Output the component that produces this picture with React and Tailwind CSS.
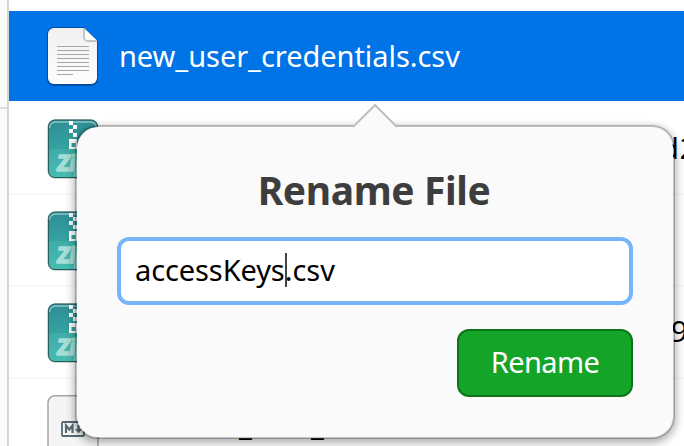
function TextFileIcon() {
  return (
    <svg width="56" height="64" viewBox="0 0 56 64" className="-mx-0.5 shrink-0 translate-y-px">
      <defs>
        <linearGradient id="paper" x1="0" y1="0" x2="0" y2="1">
          <stop offset="0" stopColor="#f1f1f1" />
          <stop offset="1" stopColor="#fdfdfd" />
        </linearGradient>
      </defs>
      <path d="M9 2H38.500L53 16.500V54a7 7 0 0 1-7 7H9a7 7 0 0 1-7-7V9a7 7 0 0 1 7-7Z" fill="#00418d" opacity=".75" />
      <path d="M9 3H38.500L52 16.500V53a6 6 0 0 1-6 6H9a6 6 0 0 1-6-6V9a6 6 0 0 1 6-6Z" fill="url(#paper)" />
      <path d="M39 3v9a4 4 0 0 0 4 4h9" fill="none" stroke="#c4c4c4" strokeWidth="2" />
      <path d="M40 4L51.500 15H43a3 3 0 0 1-3-3Z" fill="#fff" />
      <path d="M12 21.500h32M12 25.500h32M12 29.500h32M12 33.500h32M12 37.500h32M12 41.500h32M12 45.500h32M12 49.500h16" stroke="#a6a6a6" />
    </svg>
  );
}

function ZipIcon() {
  return (
    <svg width="52" height="60" viewBox="0 0 52 60" className="shrink-0 translate-y-px">
      <defs>
        <linearGradient id="zip" x1="0" y1="0" x2="0.2" y2="1">
          <stop offset="0" stopColor="#2c8b93" />
          <stop offset="1" stopColor="#3fb8ae" />
        </linearGradient>
      </defs>
      <rect x="0.500" y="0.500" width="51" height="59" rx="7.500" fill="#245f63" opacity=".5" />
      <rect x="1.500" y="1" width="49" height="57.500" rx="6.500" fill="url(#zip)" stroke="#2a5d60" />
      <path d="M2.500 9a6 6 0 0 1 6-6h35a6 6 0 0 1 6 6" fill="none" stroke="#8cc5c6" strokeWidth="1.300" />
      <path d="M2 30h48v22a6 6 0 0 1-6 6H8a6 6 0 0 1-6-6Z" fill="#6ad1bd" opacity=".2" />
      <path d="M22 2h4v4h4v4h-4v4h4v4h-4v-4h-4v-4h4V6h-4ZM22 20h8v10h-8ZM24.500 24v4h4v-4Z" fill="#fff" fillRule="evenodd" />
      <text x="10" y="52" fontFamily="Roboto, sans-serif" fontSize="22" fontWeight="900" fontStyle="italic" fill="#a5ded6" stroke="#a5ded6" strokeWidth="1.400" textLength="30" lengthAdjust="spacingAndGlyphs">Zip</text>
    </svg>
  );
}

function MarkdownIcon() {
  return (
    <svg width="52" height="60" viewBox="0 0 52 60" className="shrink-0 translate-y-px">
      <rect x="1" y="0.750" width="50" height="58" rx="7" fill="#f5f5f5" stroke="#a6a6a6" strokeWidth="1.500" />
      <rect x="15" y="27" width="22" height="14" rx="1" fill="none" stroke="#566a74" strokeWidth="1.800" />
      <path d="M19 38v-7.500l3.250 4 3.250-4V38M31.500 30v5" fill="none" stroke="#566a74" strokeWidth="2.200" />
      <path d="M28 34h7l-3.500 4.500Z" fill="#566a74" />
    </svg>
  );
}

function Row({ children }) {
  return <div className="flex h-[92px] shrink-0 items-center border-b-2 border-[#fafafa] pl-[38px]">{children}</div>;
}

export default function App() {
  return (
    <div className="relative flex h-[446px] w-[684px] overflow-hidden bg-white font-['Noto_Sans',sans-serif] text-[29px] leading-[40px] whitespace-pre text-black">
      <aside className="h-full w-[9px] shrink-0 border-r-2 border-[#d5d5d5] bg-[#fafafa] pt-[107px]">
        <div className="h-0.5 bg-[#dedede]" />
      </aside>
      <main className="flex min-w-0 flex-1 flex-col pt-[11px]">
        <div className="mb-0.5 flex h-[90px] shrink-0 items-center bg-[#0073e6] pl-[38px] text-white">
          <TextFileIcon />
          <span className="ml-5 tracking-[-0.05px]">new_user_credentials.csv</span>
        </div>
        <Row>
          <ZipIcon />
          <span className="ml-[562px] tracking-[0.8px]">d2</span>
        </Row>
        <Row>
          <ZipIcon />
        </Row>
        <Row>
          <ZipIcon />
          <span className="ml-[572px] -translate-y-px">9</span>
        </Row>
        <Row>
          <MarkdownIcon />
          <span className="ml-[140px] w-[72px]">_</span>
          <span>_</span>
        </Row>
      </main>

      <section className="absolute top-[125px] left-[75px] flex h-[314px] w-[600px] flex-col rounded-[23px] border-2 border-black/23 bg-[#fafafa] bg-clip-padding px-10 pt-[38px] shadow-[0_3px_9px_1px_rgba(0,0,0,0.32)]">
        <svg width="46" height="25" viewBox="0 0 46 25" className="absolute -top-6 left-[275px]">
          <path d="M0 26V24L1 24L23 2L45 24H46V26Z" fill="#fafafa" />
          <path d="M1 24L23 2L45 24" fill="none" stroke="#bfbfbf" strokeWidth="2" />
        </svg>
        <h1 className="h-[52px] -translate-x-px -translate-y-px text-center text-[39px] leading-[52px] font-bold tracking-[-0.4px] text-[#3d3d3d]">Rename File</h1>
        <div className="mt-5 flex h-[68px] shrink-0 items-center rounded-xl border-4 border-[#75b6fb] bg-white pb-0.5 pl-3.5">
          <span className="tracking-[-0.1px]">accessKeys</span>
          <span className="h-[34px] w-0.5 bg-[#444]" />
          <span className="-ml-0.5">.csv</span>
        </div>
        <button className="mt-6 h-[68px] w-[176px] shrink-0 self-end rounded-xl border-2 border-[#0e741c] bg-[#14a428] pb-0.5 tracking-[-0.6px] text-white">Rename</button>
      </section>
    </div>
  );
}
